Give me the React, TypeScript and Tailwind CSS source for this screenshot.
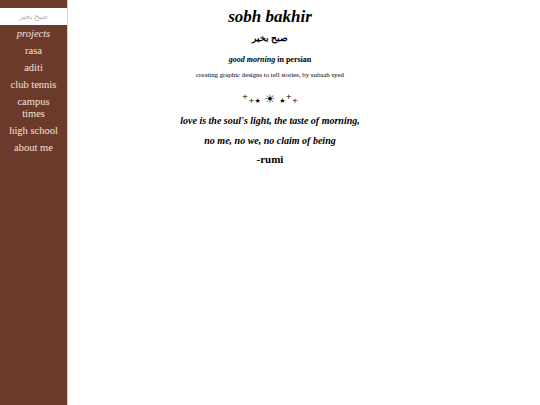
const serif = { fontFamily: '"Liberation Serif", "Times New Roman", serif' }

const links = ['rasa', 'aditi', 'club tennis', 'campus times', 'high school', 'about me']

function Sidebar() {
  return (
    <nav className="fixed left-0 top-0 h-screen w-[68px] bg-[#6b3a2b] border-r border-[#e9c9c0] pt-2" style={serif}>
      <div className="bg-white h-[17px] flex items-center justify-center text-[8px] text-[#bdb4b1]">
        صبح بخیر
      </div>
      <ul className="flex flex-col items-center text-center text-[10.5px] leading-[12px] text-[#f4e2da]">
        <li className="italic py-[2.5px]">projects</li>
        {links.map((l) => (
          <li key={l} className="py-[2.5px] px-2">{l}</li>
        ))}
      </ul>
    </nav>
  )
}

export default function App() {
  return (
    <div className="min-h-screen bg-white text-black" style={serif}>
      <Sidebar />
      <main className="flex flex-col items-center text-center pt-[7px]">
        <h1 className="text-[17px] leading-[20px] font-bold italic">sobh bakhir</h1>
        <p className="mt-[5px] text-[9px] leading-[12px] font-bold">صبح بخیر</p>
        <p className="mt-[11px] text-[8px] leading-[10px] font-bold"><i>good morning</i> in persian</p>
        <p className="mt-[5px] text-[6.8px] leading-[9px]">creating graphic designs to tell stories, by subaah syed</p>
        <p className="mt-[12px] h-4 text-[12px] leading-[16px]" style={{ fontFamily: '"DejaVu Sans", sans-serif' }}>
          ⁺₊<span className="text-[7px] leading-none">★</span> ☀︎ <span className="text-[7px] leading-none">★</span>⁺₊
        </p>
        <p className="mt-[7px] text-[10px] leading-[13px] font-bold italic">love is the soul's light, the taste of morning,</p>
        <p className="mt-[7px] text-[10px] leading-[13px] font-bold italic">no me, no we, no claim of being</p>
        <p className="mt-[5px] text-[11px] leading-[14px] font-bold">-rumi</p>
      </main>
    </div>
  )
}
